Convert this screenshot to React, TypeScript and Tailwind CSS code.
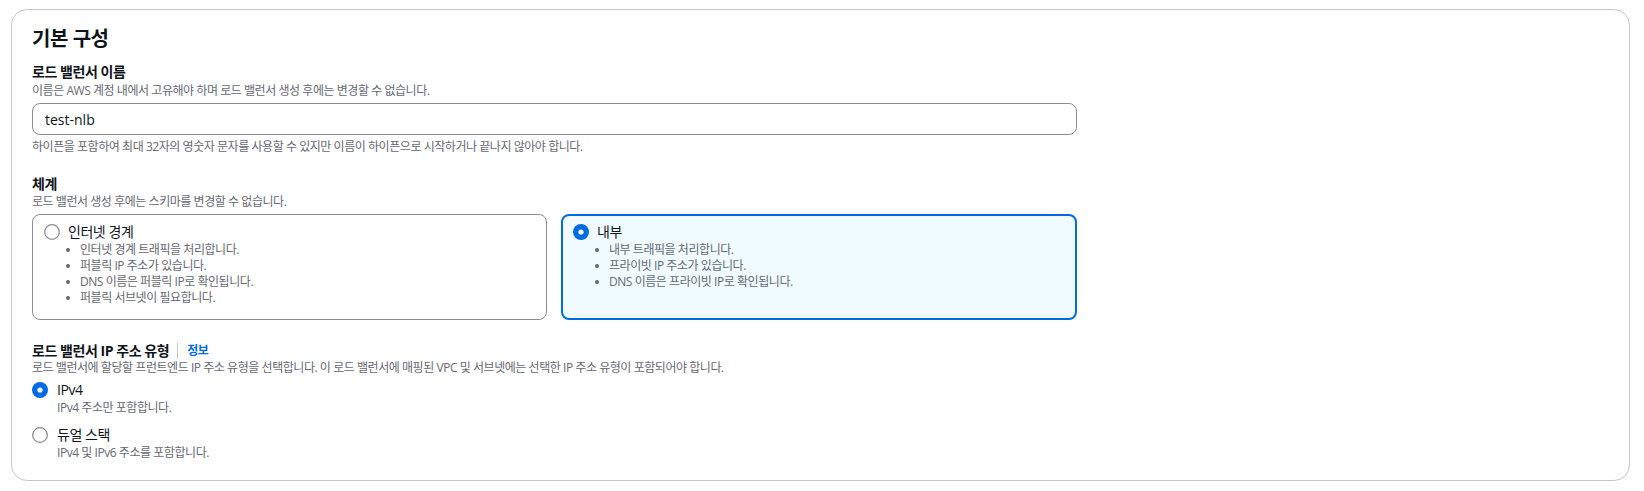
import React from "react";

const FONT = "font-['Open_Sans','Noto_Sans_CJK_KR',sans-serif]";

function Radio({ checked }: { checked: boolean }) {
  return (
    <svg width="16" height="16" viewBox="0 0 16 16" className="shrink-0">
      {checked ? (
        <>
          <circle cx="8" cy="8" r="8" fill="#006ce0" />
          <circle cx="8" cy="8" r="2.6" fill="#ffffff" />
        </>
      ) : (
        <circle cx="8" cy="8" r="7.3" fill="#ffffff" stroke="#8c8c94" strokeWidth="1.3" />
      )}
    </svg>
  );
}

interface Tile {
  title: string;
  items: string[];
  checked: boolean;
}

const tiles: Tile[] = [
  {
    title: "인터넷 경계",
    items: [
      "인터넷 경계 트래픽을 처리합니다.",
      "퍼블릭 IP 주소가 있습니다.",
      "DNS 이름은 퍼블릭 IP로 확인됩니다.",
      "퍼블릭 서브넷이 필요합니다.",
    ],
    checked: false,
  },
  {
    title: "내부",
    items: [
      "내부 트래픽을 처리합니다.",
      "프라이빗 IP 주소가 있습니다.",
      "DNS 이름은 프라이빗 IP로 확인됩니다.",
    ],
    checked: true,
  },
];

const ipTypes = [
  { title: "IPv4", desc: "IPv4 주소만 포함합니다.", checked: true },
  { title: "듀얼 스택", desc: "IPv4 및 IPv6 주소를 포함합니다.", checked: false },
];

export default function App() {
  return (
    <div className={`${FONT} min-h-screen bg-white pt-[9px] pl-[11px] pr-[14px] pb-[10px] tracking-[-0.45px] text-[#0f141a]`}>
      <div className="rounded-2xl border border-[#c6c6cd] bg-white px-[20px] pt-[17px] pb-[19px]">
        <h2 className="text-[20px] leading-[24px] font-bold">기본 구성</h2>

        {/* load balancer name */}
        <div className="mt-[11px] w-[1045px]">
          <div className="text-[14px] leading-5 font-bold">로드 밸런서 이름</div>
          <div className="mt-[1px] text-[12px] leading-4 text-[#656871]">
            이름은 AWS 계정 내에서 고유해야 하며 로드 밸런서 생성 후에는 변경할 수 없습니다.
          </div>
          <div className="mt-[4px] flex h-[32px] items-center rounded-lg border border-[#8c8c94] px-3 text-[14px] tracking-normal">
            test-nlb
          </div>
          <div className="mt-[4px] text-[12px] leading-4 text-[#656871]">
            하이픈을 포함하여 최대 32자의 영숫자 문자를 사용할 수 있지만 이름이 하이픈으로 시작하거나 끝나지 않아야 합니다.
          </div>
        </div>

        {/* scheme */}
        <div className="mt-[19px] w-[1045px]">
          <div className="text-[14px] leading-5 font-bold">체계</div>
          <div className="text-[12px] leading-4 text-[#656871]">
            로드 밸런서 생성 후에는 스키마를 변경할 수 없습니다.
          </div>
          <div className="mt-[4px] grid grid-cols-[515px_1fr] gap-[14px]">
            {tiles.map((t) =>
              <div
                key={t.title}
                className={
                  t.checked
                    ? "h-[106px] rounded-lg border-2 border-[#006ce0] bg-[#f0fbff] pl-[10px] pt-[6px]"
                    : "h-[106px] rounded-lg border border-[#8c8c94] bg-white pl-[11px] pt-[7px]"
                }
              >
                <div className="flex items-center gap-[8px]">
                  <Radio checked={t.checked} />
                  <span className="text-[14px] leading-5">{t.title}</span>
                </div>
                <ul className="text-[12px] leading-4 text-[#656871]">
                  {t.items.map((it) => (
                    <li key={it} className="flex items-center">
                      <span className="ml-[22px] mr-[10px] h-[4px] w-[4px] rounded-full bg-[#656871]" />
                      {it}
                    </li>
                  ))}
                </ul>
              </div>
            )}
          </div>
        </div>

        {/* ip address type */}
        <div className="mt-[22px]">
          <div className="flex items-center text-[14px] leading-[18px]">
            <span className="font-bold">로드 밸런서 IP 주소 유형</span>
            <span className="ml-[8px] mr-[9px] h-[16px] w-px bg-[#c6c6cd]" />
            <span className="text-[12px] font-bold text-[#006ce0]">정보</span>
          </div>
          <div className="text-[12px] leading-4 text-[#656871]">
            로드 밸런서에 할당할 프런트엔드 IP 주소 유형을 선택합니다. 이 로드 밸런서에 매핑된 VPC 및 서브넷에는 선택한 IP 주소 유형이 포함되어야 합니다.
          </div>
          <div className="mt-[4px] flex flex-col gap-[9px]">
            {ipTypes.map((o) => (
              <div key={o.title}>
                <div className="flex items-center gap-[9px]">
                  <Radio checked={o.checked} />
                  <span className="text-[14px] leading-5">{o.title}</span>
                </div>
                <div className="pl-[25px] text-[12px] leading-4 text-[#656871]">{o.desc}</div>
              </div>
            ))}
          </div>
        </div>
      </div>
    </div>
  );
}
